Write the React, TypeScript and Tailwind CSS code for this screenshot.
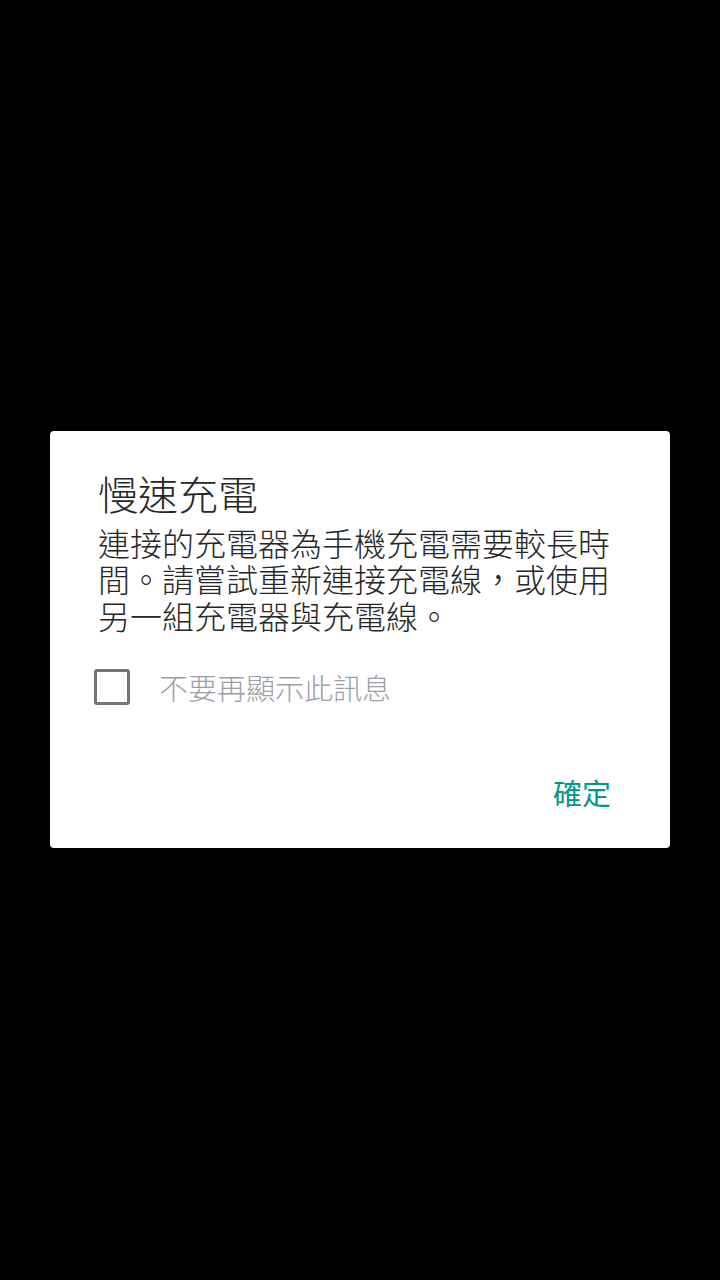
import { useState } from "react";

const cjk = "font-['Noto_Sans_CJK_TC','Noto_Sans',sans-serif]";

export default function App() {
  const [checked, setChecked] = useState(false);

  return (
    <div className={`flex min-h-screen w-full items-center justify-center bg-black ${cjk}`}>
      <div
        role="dialog"
        aria-modal="true"
        aria-labelledby="slow-charge-title"
        className="mb-[2px] flex h-[417px] w-[620px] flex-col rounded-[4px] bg-white pt-[38px] pb-[28px] pl-[48px] pr-[48px]"
      >
        <h1 id="slow-charge-title" className="text-[40px] leading-[48px] font-light text-[#262626]">
          慢速充電
        </h1>

        <p className="mt-[7px] text-[32px] leading-[36.5px] font-light text-[#262626]">
          連接的充電器為手機充電需要較長時間。請嘗試重新連接充電線，或使用另一組充電器與充電線。
        </p>

        <label className="mt-[29.5px] -ml-[4px] flex h-[48px] cursor-pointer items-center gap-[29px]">
          <input
            type="checkbox"
            checked={checked}
            onChange={(e) => setChecked(e.target.checked)}
            className="peer sr-only"
          />
          <span className="h-[36px] w-[36px] shrink-0 rounded-[3px] border-[3.5px] border-[#757575]" />
          <span className="text-[29px] leading-[36px] font-light text-[#9aa0a6]">不要再顯示此訊息</span>
        </label>

        <div className="mt-[53px] flex h-[56px] items-center justify-end">
          <button type="button" className="mr-[11px] text-[29px] leading-[36px] text-[#009688]">
            確定
          </button>
        </div>
      </div>
    </div>
  );
}
